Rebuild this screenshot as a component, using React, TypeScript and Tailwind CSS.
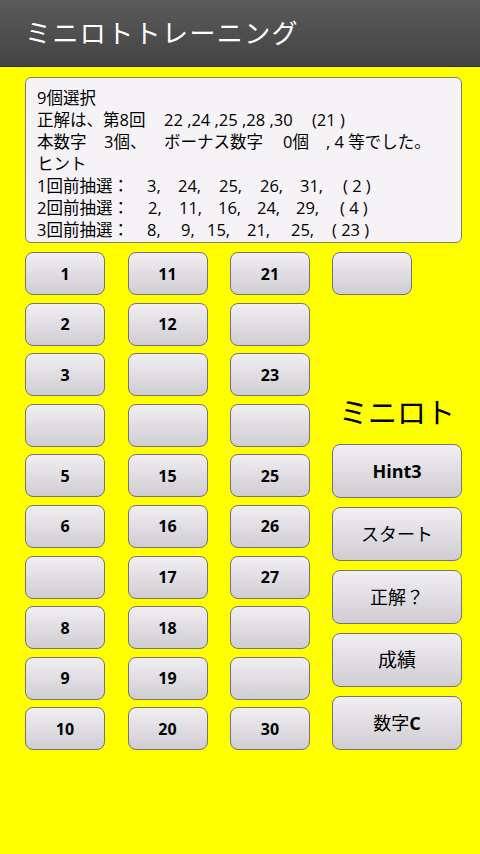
import React from "react";

const FONT = "font-['Open_Sans','Noto_Sans_CJK_JP',sans-serif]";

type Cell = { t: string; w?: number };

// one line of the info box, each cell gets a fixed width so columns line up
const InfoLine = ({ cells }: { cells: Cell[] }) => (
  <div className="flex h-[22px] items-center whitespace-pre">
    {cells.map((c, i) => (
      <span key={i} className="inline-block shrink-0" style={c.w ? { width: c.w } : undefined}>
        {c.t}
      </span>
    ))}
  </div>
);

const numbers: (string | null)[][] = [
  ["1", "11", "21"],
  ["2", "12", null],
  ["3", null, "23"],
  [null, null, null],
  ["5", "15", "25"],
  ["6", "16", "26"],
  [null, "17", "27"],
  ["8", "18", null],
  ["9", "19", null],
  ["10", "20", "30"],
];

const btn =
  "rounded-[8px] border border-[#75727a] bg-gradient-to-b from-[#f1eff2] via-[#e0dee2] to-[#d0cdd2] text-black";

const NumButton = ({ label }: { label: string | null }) => (
  <div className={`${btn} flex h-[43px] w-[80px] items-center justify-center text-[16px] font-bold`}>
    {label}
  </div>
);

const BigButton = ({ children }: { children: React.ReactNode }) => (
  <div className={`${btn} flex h-[54px] w-[130px] items-center justify-center text-[18px]`}>
    {children}
  </div>
);

export default function App() {
  return (
    <div className={`${FONT} min-h-[854px] w-[480px] bg-[#ffff00]`}>
      <div className="flex h-[67px] items-center border-b border-[#2c2c2c] bg-gradient-to-b from-[#5a5a5a] to-[#444444] pl-[25px]">
        <span className="text-[26px] tracking-[1.4px] text-white">ミニロトトレーニング</span>
      </div>

      <div className="pl-[25px] pr-[18px] pt-[10px]">
        <div className="h-[166px] overflow-hidden rounded-[6px] border border-[#7b7b7b] bg-[#f6f3f7] pl-[11px] pt-[9px] text-[16.5px] leading-[22px] text-black">
          <InfoLine cells={[{ t: "9個選択" }]} />
          <InfoLine cells={[{ t: "正解は、第8回", w: 127 }, { t: "22 ,24 ,25 ,28 ,30", w: 148 }, { t: "(21 )" }]} />
          <InfoLine
            cells={[
              { t: "本数字", w: 67 },
              { t: "3個、", w: 60 },
              { t: "ボーナス数字", w: 119 },
              { t: "0個", w: 43 },
              { t: ", 4 等でした。" },
            ]}
          />
          <InfoLine cells={[{ t: "ヒント" }]} />
          <InfoLine
            cells={[
              { t: "1回前抽選：", w: 110 },
              { t: "3,", w: 31 },
              { t: "24,", w: 41 },
              { t: "25,", w: 41 },
              { t: "26,", w: 40 },
              { t: "31,", w: 43 },
              { t: "( 2 )" },
            ]}
          />
          <InfoLine
            cells={[
              { t: "2回前抽選：", w: 111 },
              { t: "2,", w: 31 },
              { t: "11,", w: 39 },
              { t: "16,", w: 39 },
              { t: "24,", w: 39 },
              { t: "29,", w: 44 },
              { t: "( 4 )" },
            ]}
          />
          <InfoLine
            cells={[
              { t: "3回前抽選：", w: 110 },
              { t: "8,", w: 34 },
              { t: "9,", w: 26 },
              { t: "15,", w: 40 },
              { t: "21,", w: 44 },
              { t: "25,", w: 41 },
              { t: "( 23 )" },
            ]}
          />
        </div>

        <div className="mt-[9px] flex gap-x-[22px]">
          <div className="grid grid-cols-[80px_80px_80px] gap-x-[22.5px] gap-y-[7.6px]">
            {numbers.flat().map((n, i) => (
              <NumButton key={i} label={n} />
            ))}
          </div>

          <div className="flex w-[130px] shrink-0 flex-col">
            <NumButton label={null} />
            <div className="mt-[100px] h-[36px] whitespace-nowrap pl-[7px] text-[29px] leading-[36px] text-black">
              ミニロト
            </div>
            <div className="mt-[13px] flex flex-col gap-y-[9px]">
              <BigButton>
                <span className="font-bold">Hint3</span>
              </BigButton>
              <BigButton>スタート</BigButton>
              <BigButton>正解？</BigButton>
              <BigButton>
                <span className="text-[19px]">成績</span>
              </BigButton>
              <BigButton>
                数字<span className="font-bold">C</span>
              </BigButton>
            </div>
          </div>
        </div>
      </div>
    </div>
  );
}
